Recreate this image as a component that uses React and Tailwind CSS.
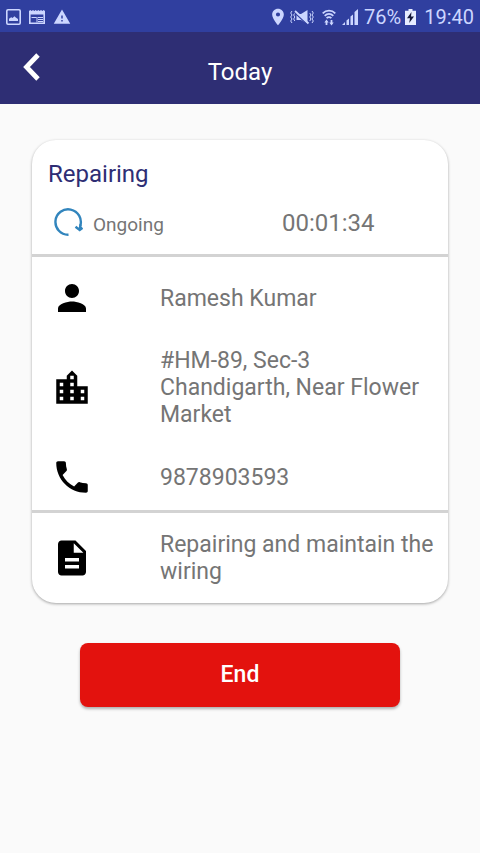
import React from 'react';
import { MdPerson, MdLocationCity, MdPhone, MdDescription, MdLocationOn, MdWarning } from 'react-icons/md';

const contactRows = [
  { icon: MdPerson, text: 'Ramesh Kumar' },
  { icon: MdLocationCity, text: '#HM-89, Sec-3 Chandigarth, Near Flower Market' },
  { icon: MdPhone, text: '9878903593' },
];

function PictureIcon() {
  return (
    <svg width="15" height="16" viewBox="0 0 15 16" fill="none">
      <rect x="0.8" y="0.8" width="13.4" height="14.4" rx="1.2" stroke="currentColor" strokeWidth="1.6" />
      <path d="M3 12V9.8l2.2-1.6 1.4.8 1.8-1.8 1.4 1.3 2.2 1.6V12z" fill="currentColor" />
    </svg>
  );
}

function NewsIcon() {
  return (
    <svg width="16" height="15" viewBox="0 0 16 15" fill="none">
      <path d="M0 1l1.3-1 1.4 1L4 0l1.3 1 1.4-1L8 1l1.3-1 1.4 1L12 0l1.3 1 1.4-1L16 1v3.5H0z" fill="currentColor" />
      <path d="M.8 3v10.2h14.4V3" stroke="currentColor" strokeWidth="1.6" />
      <path d="M2.5 7.5h5M9 7.5h5M9 9.5h5M9 11.5h5M8 7v5.5" stroke="currentColor" />
    </svg>
  );
}

function VibrateIcon() {
  return (
    <svg width="24" height="16" viewBox="0 0 24 16" fill="none">
      <path d="M2 2L.7 4 2 6 .7 8 2 10 .7 12 2 14M4.8 4L3.7 6l1.1 2-1.1 2 1.1 2" stroke="currentColor" />
      <path d="M22 2l1.3 2L22 6l1.3 2L22 10l1.3 2L22 14M19.8 4l1.1 2-1.1 2 1.1 2-1.1 2" stroke="currentColor" />
      <path d="M6.5 5H11l6.5-4v14L11 11H6.5z" fill="currentColor" />
      <path d="M4.5 3.5l13 12" stroke="#303f9f" strokeWidth="1.5" />
      <path d="M5 2l13.5 12.5" stroke="currentColor" strokeWidth="1.8" />
    </svg>
  );
}

function WifiIcon() {
  return (
    <svg width="14" height="17" viewBox="0 0 14 17" fill="none">
      <path d="M.7 4.3C4.3.7 9.7.7 13.3 4.3M2.7 6.8c2.5-2.5 6.1-2.5 8.6 0M4.6 9.2c1.5-1.4 3.3-1.4 4.8 0" stroke="currentColor" strokeWidth="1.8" />
      <path d="M4.5 10.5l2.2 3H5.4V16H3.6v-2.5H2.3zM9.5 16.5l-2.2-3h1.3V11h1.8v2.5h1.3z" fill="currentColor" />
    </svg>
  );
}

function SignalIcon() {
  return (
    <svg width="16" height="16" viewBox="0 0 16 16" fill="currentColor">
      <path d="M0 16l3-3v3zM4.5 11.5l2.5-2V16H4.5zM8.5 7.5l2.5-2V16H8.5zM12.5 3L16 0v16h-3.5z" />
    </svg>
  );
}

function BatteryIcon() {
  return (
    <svg width="11" height="16" viewBox="0 0 11 16">
      <path d="M3.5 0h4v1.7H11V16H0V1.7h3.5z" fill="#e6ecff" />
      <path d="M6.5 3L2 9.2h3L4.2 14 9 7.5H6z" fill="#15183a" />
    </svg>
  );
}

function OngoingIcon() {
  return (
    <svg width="31" height="30" viewBox="0 0 31 30" fill="none" stroke="#3285bd">
      <path d="M16.5 26.7A12.7 12.7 0 1 1 28.2 18" strokeWidth="2.4" />
      <path d="M28.5 16.5l-.8 5.5M23.5 18.7l4.2 3.3 2.8-2.2" strokeWidth="2.4" />
    </svg>
  );
}

function StatusBar() {
  return (
    <div className="flex h-8 items-center justify-between bg-[#303f9f] px-1.5 pt-0.5 text-[#ccd6ff]">
      <div className="flex items-center gap-2">
        <PictureIcon />
        <NewsIcon />
        <MdWarning className="size-[18px]" />
      </div>
      <div className="flex items-center gap-1 text-[20px] leading-6">
        <span className="flex items-center gap-0.5">
          <MdLocationOn className="size-5" />
          <VibrateIcon />
        </span>
        <span className="flex items-center gap-1.5 pr-0.5 pl-1">
          <WifiIcon />
          <SignalIcon />
        </span>
        <span>76%</span>
        <BatteryIcon />
        <span className="pl-1">19:40</span>
      </div>
    </div>
  );
}

function InfoRow({ icon: Icon, text }) {
  return (
    <div className="flex items-center gap-12 pr-3">
      <div className="flex w-20 shrink-0 justify-center">
        <Icon className="size-[42px] text-black" />
      </div>
      <p className="text-[23px] leading-[27px] text-[#757575]">{text}</p>
    </div>
  );
}

export default function App() {
  return (
    <div className="min-h-screen bg-[#fafafa] font-['Roboto',sans-serif]">
      <StatusBar />

      {/* Header */}
      <header className="grid h-[72px] grid-cols-[64px_1fr_64px] items-center bg-[#2e2e74] text-white">
        <button type="button" aria-label="Back" className="flex h-full items-center justify-center">
          <svg width="18" height="32" viewBox="0 0 18 32" fill="none" stroke="currentColor" strokeWidth="4.8">
            <path d="M15 3L3.500 15 15 27" />
          </svg>
        </button>
        <h1 className="pt-2 text-center text-[24px] leading-7">Today</h1>
      </header>

      <main className="px-8 pt-9">
        {/* Job card */}
        <section className="overflow-hidden rounded-3xl bg-white shadow-[0_1px_3px_rgba(0,0,0,0.35)]">
          <div className="px-4 pt-5 pb-4">
            <h2 className="text-[24px] leading-7 text-[#2e2e74]">Repairing</h2>
            <div className="mt-5 flex items-center">
              <div className="flex flex-1 items-center gap-2.5 pl-1">
                <OngoingIcon />
                <span className="pt-1 text-[19px] leading-6 text-[#757575]">Ongoing</span>
              </div>
              <span className="w-[150px] text-[24px] leading-7 text-[#757575]">00:01:34</span>
            </div>
          </div>

          <div className="flex flex-col gap-7 border-y-3 border-[#d3d3d3] pt-5 pb-3">
            {contactRows.map((row) => (
              <InfoRow key={row.text} icon={row.icon} text={row.text} />
            ))}
          </div>

          <div className="py-[18px]">
            <InfoRow icon={MdDescription} text="Repairing and maintain the wiring" />
          </div>
        </section>

        <div className="px-12 pt-10">
          <button
            type="button"
            className="h-16 w-full rounded-lg bg-[#e3120e] text-[23px] leading-7 font-medium text-white shadow-[0_2px_3px_rgba(0,0,0,0.3)]"
          >
            End
          </button>
        </div>
      </main>
    </div>
  );
}
